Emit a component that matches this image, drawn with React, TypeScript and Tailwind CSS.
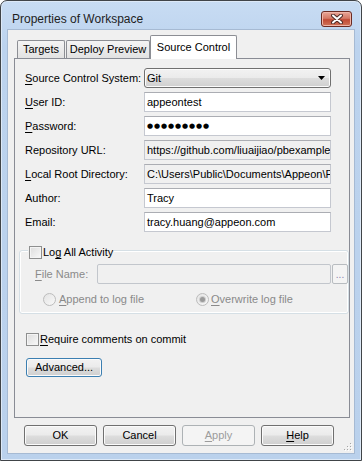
import type { ReactNode } from "react";

const buttonFace =
  "bg-[linear-gradient(#f2f2f2_0%,#ebebeb_48%,#dddddd_52%,#cfcfcf_100%)] shadow-[inset_0_0_0_1px_#fbfbfb]";

function Key({ children }: { children: ReactNode }) {
  return <span className="underline underline-offset-[2px]">{children}</span>;
}

function Field({ children, readOnly }: { children: ReactNode; readOnly?: boolean }) {
  return (
    <div
      className={`h-[20px] flex items-center overflow-hidden whitespace-nowrap border border-[#c5c8d0] border-t-[#abadb3] pl-[2px] ${
        readOnly ? "bg-[#f0f0f0]" : "bg-white"
      }`}
    >
      {children}
    </div>
  );
}

function CheckBox() {
  return (
    <div className="w-[13px] h-[13px] shrink-0 border border-[#8e8f8f] bg-[linear-gradient(135deg,#dcdcdc,#f9f9f9)] shadow-[inset_0_0_0_1px_#f4f4f4]" />
  );
}

function Radio({ checked }: { checked?: boolean }) {
  return (
    <div className="w-[13px] h-[13px] shrink-0 rounded-full border border-[#bcbcbc] bg-[linear-gradient(135deg,#e4e4e4,#f8f8f8)] flex items-center justify-center">
      {checked && <div className="w-[5px] h-[5px] rounded-full bg-[#9a9a9a] shadow-[0_0_0_1px_#cfcfcf]" />}
    </div>
  );
}

function DialogButton({ children, disabled }: { children: ReactNode; disabled?: boolean }) {
  return (
    <div
      className={`w-[73px] h-[21px] flex items-center justify-center rounded-[3px] border ${
        disabled
          ? "border-[#adb2b5] bg-[#f4f4f4] text-[#9c9c9c]"
          : `border-[#707070] ${buttonFace}`
      }`}
    >
      {children}
    </div>
  );
}

export default function App() {
  return (
    <div className="w-[362px] h-[461px] bg-white font-['Liberation_Sans',Arial,sans-serif] text-[11px] text-black">
      <div className="w-full h-full flex flex-col px-[6px] pb-[6px] rounded-t-[7px] border border-[#404448] bg-[linear-gradient(180deg,#c8dcf3_0%,#bcd3ee_10%,#bad1ec_100%)] shadow-[inset_0_0_0_1px_#dde9f7]">
        {/* title bar */}
        <div className="h-[28px] flex items-start justify-between shrink-0">
          <span className="mt-[11px] ml-[5px] text-[12px] leading-[14px] text-[#1e1e1e]">
            Properties of Workspace
          </span>
          <div className="mt-[10px] mr-[3px] w-[31px] h-[16px] rounded-[3px] border border-[#6a2a22] bg-[linear-gradient(#e9a698_0%,#d47966_45%,#c14a35_55%,#cf7459_100%)] shadow-[inset_0_0_0_1px_#efb5a8] flex items-center justify-center">
            <svg width="12" height="10" viewBox="0 0 12 10">
              <path d="M2 1.5L10 8.5M10 1.5L2 8.5" stroke="#4d2a26" strokeWidth="4" strokeLinecap="round" />
              <path d="M2 1.5L10 8.5M10 1.5L2 8.5" stroke="#ffffff" strokeWidth="2" strokeLinecap="round" />
            </svg>
          </div>
        </div>

        {/* client */}
        <div className="relative flex-1 flex flex-col border border-[#a6bad3] bg-[#f0f0f0] pt-[5px]">
          {/* tabs */}
          <div className="h-[23px] ml-[6px] pl-[3px] flex items-end">
            <div className="w-[48px] h-[18px] flex items-center justify-center rounded-t-[2px] border border-b-0 border-[#8c8e94] bg-[linear-gradient(#f4f4f4,#e2e2e2)]">
              Targets
            </div>
            <div className="ml-px w-[84px] h-[18px] flex items-center justify-center rounded-t-[2px] border border-b-0 border-[#8c8e94] bg-[linear-gradient(#f4f4f4,#e2e2e2)]">
              Deploy Preview
            </div>
            <div className="relative z-10 -mb-px w-[87px] h-[24px] flex items-start justify-center pt-[3px] rounded-t-[2px] border border-b-0 border-[#8c8e94] bg-white">
              Source Control
            </div>
          </div>

          {/* tab page */}
          <div className="ml-[6px] w-[336px] h-[360px] overflow-hidden border border-[#898c95] bg-[#f0f0f0] flex flex-col">
            <div className="pt-[9px] pl-[10px] grid grid-cols-[119px_187px] auto-rows-[20px] gap-y-[4px] items-center">
              <span>
                <Key>S</Key>ource Control System:
              </span>
              <div className={`h-[20px] flex items-center justify-between pl-[2px] pr-[5px] rounded-[3px] border border-[#707070] ${buttonFace}`}>
                <span>Git</span>
                <svg width="7" height="4" viewBox="0 0 7 4">
                  <path d="M0 0H7L3.5 4Z" fill="#000" />
                </svg>
              </div>

              <span>
                <Key>U</Key>ser ID:
              </span>
              <Field>appeontest</Field>

              <span>
                <Key>P</Key>assword:
              </span>
              <Field>
                <span className="font-['DejaVu_Sans',sans-serif] text-[7px] tracking-[0.9px]">●●●●●●●●●</span>
              </Field>

              <span>Repository URL:</span>
              <Field readOnly>https://github.com/liuaijiao/pbexample</Field>

              <span>
                <Key>L</Key>ocal Root Directory:
              </span>
              <Field readOnly>C:\Users\Public\Documents\Appeon\P</Field>

              <span>Author:</span>
              <Field>Tracy</Field>

              <span>Email:</span>
              <Field>tracy.huang@appeon.com</Field>
            </div>

            {/* log group */}
            <div className="relative mt-[18px] ml-[4px] w-[330px] h-[64px] shrink-0 rounded-[3px] border border-[#d5dfe5] shadow-[inset_0_0_0_1px_#ffffff]">
              <div className="absolute top-[-5px] left-[8px] px-px flex items-center bg-[#f0f0f0] leading-[13px]">
                <CheckBox />
                <span className="ml-[1px]">
                  Lo<Key>g</Key> All Activity
                </span>
              </div>

              <div className="pt-[13px] pl-[15px] flex items-center text-[#8a8a8a]">
                <span className="w-[62px]">
                  <Key>F</Key>ile Name:
                </span>
                <div className="w-[235px] h-[20px] rounded-[2px] border border-[#c2c6cc] bg-[#f0f0f0]" />
                <div className="ml-[1px] w-[16px] h-[20px] shrink-0 flex items-center justify-center rounded-[2px] border border-[#b8bcc0] bg-[#f4f4f4] text-[#8d7fae] text-[10px]">
                  ...
                </div>
              </div>

              <div className="mt-[7px] pl-[23px] flex items-center text-[#8a8a8a]">
                <div className="w-[153px] flex items-center gap-[3px]">
                  <Radio />
                  <span>
                    <Key>A</Key>ppend to log file
                  </span>
                </div>
                <div className="flex items-center gap-[2px]">
                  <Radio checked />
                  <span>
                    <Key>O</Key>verwrite log file
                  </span>
                </div>
              </div>
            </div>

            <div className="mt-[17px] ml-[11px] flex items-center">
              <CheckBox />
              <span className="ml-[1px]">
                <Key>R</Key>equire comments on commit
              </span>
            </div>

            <div className={`mt-[10px] ml-[11px] w-[76px] h-[19px] flex items-center justify-center rounded-[3px] border border-[#3c7fb1] ${buttonFace}`}>
              Advanced...
            </div>
          </div>

          {/* dialog buttons */}
          <div className="mt-[7px] ml-[16px] flex gap-[6px]">
            <DialogButton>OK</DialogButton>
            <DialogButton>Cancel</DialogButton>
            <DialogButton disabled>
              <Key>A</Key>pply
            </DialogButton>
            <DialogButton>
              <Key>H</Key>elp
            </DialogButton>
          </div>

          {/* size grip */}
          <svg className="absolute right-[1px] bottom-[1px]" width="10" height="10" viewBox="0 0 10 10">
            <g fill="#ffffff">
              <rect x="8" y="2" width="1" height="1" />
              <rect x="5" y="5" width="1" height="1" />
              <rect x="8" y="5" width="1" height="1" />
              <rect x="2" y="8" width="1" height="1" />
              <rect x="5" y="8" width="1" height="1" />
              <rect x="8" y="8" width="1" height="1" />
            </g>
            <g fill="#a6a6a6">
              <rect x="7" y="1" width="1" height="1" />
              <rect x="4" y="4" width="1" height="1" />
              <rect x="7" y="4" width="1" height="1" />
              <rect x="1" y="7" width="1" height="1" />
              <rect x="4" y="7" width="1" height="1" />
              <rect x="7" y="7" width="1" height="1" />
            </g>
          </svg>
        </div>
      </div>
    </div>
  );
}
